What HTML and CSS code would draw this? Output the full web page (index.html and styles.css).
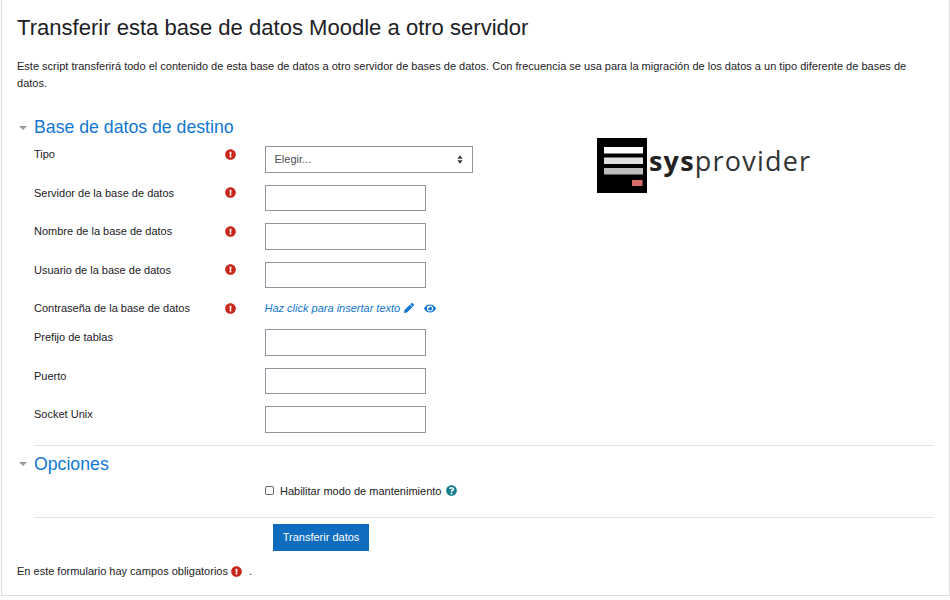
FILE: index.html
```html
<!DOCTYPE html>
<html lang="es">
<head>
<meta charset="utf-8">
<title>Transferir base de datos</title>
<link rel="stylesheet" href="styles.css">
</head>
<body>
<svg class="defs" width="0" height="0" aria-hidden="true">
  <symbol id="req" viewBox="0 0 512 512"><path d="M504 256c0 137-111 248-248 248S8 393 8 256 119 8 256 8s248 111 248 248zm-248 50c-25 0-46 21-46 46s21 46 46 46 46-21 46-46-21-46-46-46zm-44-165 8 136c0 6 6 11 12 11h48c6 0 12-5 12-11l8-136c0-7-5-13-12-13h-64c-7 0-12 6-12 13z"/></symbol>
</svg>
<main class="card">
  <h2 class="title">Transferir esta base de datos Moodle a otro servidor</h2>
  <p class="intro">Este script transferirá todo el contenido de esta base de datos a otro servidor de bases de datos. Con frecuencia se usa para la migración de los datos a un tipo diferente de bases de datos.</p>

  <div class="logo">
    <svg class="logo-mark" viewBox="0 0 50 55" aria-hidden="true">
      <rect width="50" height="55" fill="#000"/>
      <rect x="7" y="9" width="39" height="6.500" fill="#fff"/>
      <rect x="7" y="19.500" width="39" height="6.500" fill="#e2e2e2"/>
      <rect x="7" y="30" width="39" height="6.500" fill="#bdbdbd"/>
      <rect x="35" y="42" width="10.500" height="6" fill="#d96b6b"/>
    </svg>
    <span class="logo-text"><b>sys</b>provider</span>
  </div>

  <section class="group">
    <h3 class="legend"><span class="caret"></span>Base de datos de destino</h3>
    <div class="row row-select">
      <label class="lbl">Tipo</label>
      <svg class="req"><use href="#req"/></svg>
      <div class="select"><span class="select-text">Elegir...</span><svg class="updown" viewBox="0 0 7 10"><path d="M3.5 0 6.5 4H.5zM3.5 10 .5 6h6z"/></svg></div>
    </div>
    <div class="row"><label class="lbl">Servidor de la base de datos</label><svg class="req"><use href="#req"/></svg><div class="input"></div></div>
    <div class="row"><label class="lbl">Nombre de la base de datos</label><svg class="req"><use href="#req"/></svg><div class="input"></div></div>
    <div class="row"><label class="lbl">Usuario de la base de datos</label><svg class="req"><use href="#req"/></svg><div class="input"></div></div>
    <div class="row row-pass">
      <label class="lbl">Contraseña de la base de datos</label><svg class="req"><use href="#req"/></svg>
      <div class="pass">
        <em>Haz click para insertar texto</em>
        <svg class="pencil" viewBox="0 0 512 512"><path d="M497.900 142.100 452 188c-5 5-12.300 5-17 0L324.600 77c-5-5-5-12.300 0-17l45.900-45.900c18.700-18.700 49.100-18.700 67.900 0l59.500 59.500c18.800 18.800 18.800 49.200 0 68.500zM285 99 23.500 360.500 2.300 481.900c-2.900 16.400 11.400 30.600 27.800 27.800l121.400-21.300L413 227c5-5 5-12 0-17L302 99c-5-5-12-5-17 0z"/></svg>
        <svg class="eye" viewBox="0 0 576 512"><path d="M572.500 241.400C518.300 135.600 410.900 64 288 64S57.700 135.600 3.500 241.400a32.400 32.400 0 0 0 0 29.200C57.700 376.400 165.100 448 288 448s230.300-71.600 284.500-177.400a32.400 32.400 0 0 0 0-29.200zM288 400a144 144 0 1 1 144-144 143.900 143.900 0 0 1-144 144zm0-240a95.300 95.300 0 0 0-25.300 3.800 47.900 47.900 0 0 1-66.900 66.900A95.800 95.800 0 1 0 288 160z"/></svg>
      </div>
    </div>
    <div class="row"><label class="lbl">Prefijo de tablas</label><span class="noreq"></span><div class="input"></div></div>
    <div class="row"><label class="lbl">Puerto</label><span class="noreq"></span><div class="input"></div></div>
    <div class="row"><label class="lbl">Socket Unix</label><span class="noreq"></span><div class="input"></div></div>
  </section>

  <section class="group-opts">
    <h3 class="legend"><span class="caret"></span>Opciones</h3>
    <div class="check">
      <span class="box"></span>
      <span>Habilitar modo de mantenimiento</span>
      <svg class="help" viewBox="0 0 512 512"><path d="M504 256c0 137-111 248-248 248S8 393 8 256 119 8 256 8s248 111 248 248zM263 90c-54 0-89 23-116 64-4 5-3 12 3 16l35 26c5 4 13 3 17-2 18-23 30-36 58-36 21 0 46 13 46 33 0 15-12 23-33 34-23 14-55 31-55 73v7c0 7 5 12 12 12h56c7 0 12-5 12-12v-2c0-30 85-31 85-110 0-59-62-103-120-103zm-7 254c-25 0-46 21-46 46s21 46 46 46 46-21 46-46-21-46-46-46z"/></svg>
    </div>
  </section>

  <div class="actions"><button class="btn" type="button">Transferir datos</button></div>
  <p class="note">En este formulario hay campos obligatorios <svg class="req req-inline"><use href="#req"/></svg> <span class="dot">.</span></p>
</main>
</body>
</html>
```
FILE: styles.css
```css
* { box-sizing: border-box; }
html, body { margin: 0; background: #fff; height: 600px; overflow: hidden; }
body { font-family: "Liberation Sans", Arial, sans-serif; font-size: 11px; line-height: 18px; color: #1d2125; }
.defs { position: absolute; }
.card {
  position: relative;
  margin: -20px 0 0 1px;
  width: 949px;
  height: 615.500px;
  padding: 34px 15px 0;
  border: 1px solid #dedede;
}
.title { margin: 0; font-size: 22.050px; line-height: 26px; font-weight: 400; color: #1d2125; }
.intro { margin: 17px 0 0; font-size: 11.030px; line-height: 17px; }
.logo { position: absolute; left: 595px; top: 157px; display: flex; align-items: center; gap: 2px; }
.logo-mark { width: 50px; height: 55px; display: block; }
.logo-text { font-family: "Open Sans", sans-serif; font-size: 27px; line-height: 30px; letter-spacing: 1.200px; color: #333; position: relative; top: -5px; }
.logo-text b { font-weight: 700; color: #222; }
.group { margin-top: 25px; }
.legend { margin: 0; display: flex; align-items: center; font-size: 17.700px; line-height: 21px; font-weight: 400; color: #1177d1; }
.caret { width: 0; height: 0; margin: 0 7.500px 0 1.500px; border-left: 4px solid transparent; border-right: 4px solid transparent; border-top: 4.500px solid #999; }
.row { display: flex; align-items: flex-start; height: 38.500px; margin-left: 17px; }
.row-select { margin-top: 8px; }
.row-pass { height: 29px; }
.lbl { width: 191px; margin-top: -1px; }
.req { width: 11px; height: 11px; fill: #c9261b; margin-top: 2.500px; flex: none; }
.noreq { width: 11px; flex: none; }
.row .req, .row .noreq { margin-right: 29px; margin-left: -.500px; }
.input { width: 161.500px; height: 26.500px; border: 1px solid #8f959e; background: #fff; }
.select {
  width: 208.500px; height: 27px; padding: 0 10px 0 9px;
  display: flex; align-items: center; justify-content: space-between;
  border: 1px solid #8f959e; color: #495057;
}
.select-text { margin-top: -1px; }
.updown { width: 6px; height: 9px; fill: #343a40; margin-right: -1px; }
.pass { display: flex; align-items: center; color: #1177d1; height: 18px; margin-top: -1px; }
.pass em { font-style: italic; }
.pencil { width: 10px; height: 10px; fill: #1177d1; margin-left: 4px; }
.eye { width: 12px; height: 11px; fill: #1177d1; margin-left: 10px; }
.group-opts { margin: .500px 0 0 17px; padding-top: 7.500px; border-top: 1px solid #e3e3e3; height: 71.500px; }
.group-opts .legend { margin-left: -17px; }
.check { display: flex; align-items: center; margin: 7px 0 0 231px; }
.box { width: 9px; height: 9px; margin-right: 6px; border: 1px solid #666; border-radius: 2px; background: #fff; }
.help { width: 11px; height: 11px; margin-left: 5px; fill: #0f7c8f; }
.actions { margin-left: 17px; padding: 6px 0 0 239px; border-top: 1px solid #e3e3e3; }
.btn {
  display: block; width: 96px; height: 27.500px; padding: 0; border: 1px solid #0f6cbf; background: #0f6cbf;
  color: #fff; font: 11px/18px "Liberation Sans", Arial, sans-serif;
}
.note { margin: 11px 0 0; display: flex; align-items: center; }
.req-inline { margin: 0 0 0 3px; }
.dot { margin-left: 7px; }
```
